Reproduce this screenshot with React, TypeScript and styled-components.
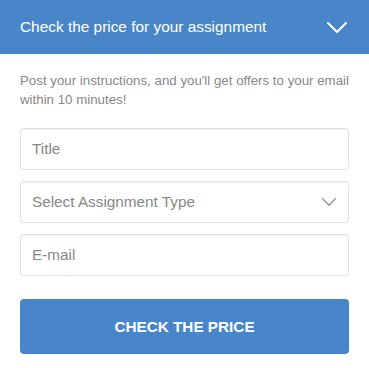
import React from "react";
import styled, { createGlobalStyle } from "styled-components";

const Global = createGlobalStyle`
  html, body { margin: 0; padding: 0; background: #fff; }
  body { font-family: "Liberation Sans", Arial, sans-serif; }
  * { box-sizing: border-box; }
`;

const Widget = styled.div`
  width: 369px;
  background: #fff;
`;

const Header = styled.div`
  height: 54px;
  background: #4986c9;
  display: flex;
  align-items: center;
  justify-content: space-between;
  padding: 0 22px 0 20px;
  color: #fff;
  font-size: 15.4px;
`;

const Body = styled.div`
  padding: 17px 20px 0 20px;
  display: flex;
  flex-direction: column;
`;

const Desc = styled.p`
  margin: 0 0 19px 0;
  color: #888;
  font-size: 13.3px;
  line-height: 19px;
`;

const Field = styled.div<{ $mb: number }>`
  height: 42px;
  border: 1px solid #dfe3e8;
  border-radius: 3px;
  box-shadow: inset 0 1px 2px rgba(0, 0, 0, 0.06);
  display: flex;
  align-items: center;
  justify-content: space-between;
  padding: 0 12px 0 11px;
  color: #888;
  font-size: 15.3px;
  margin-bottom: ${(p) => p.$mb}px;
`;

const Button = styled.button`
  height: 55px;
  border: none;
  border-radius: 4px;
  background: #4986c9;
  color: #fff;
  font-family: "Liberation Sans", Arial, sans-serif;
  font-weight: bold;
  font-size: 15.3px;
  width: 100%;
`;

const Chevron = ({ w, h, color, sw }: { w: number; h: number; color: string; sw: number }) => (
  <svg width={w} height={h} viewBox={`0 0 ${w} ${h}`} fill="none">
    <polyline
      points={`${sw / 2},${sw / 2} ${w / 2},${h - sw / 2} ${w - sw / 2},${sw / 2}`}
      stroke={color}
      strokeWidth={sw}
      strokeLinecap="round"
      strokeLinejoin="round"
    />
  </svg>
);

export default function App() {
  return (
    <Widget>
      <Global />
      <Header>
        <span>Check the price for your assignment</span>
        <Chevron w={20} h={11} color="#fff" sw={2} />
      </Header>
      <Body>
        <Desc>Post your instructions, and you'll get offers to your email within 10 minutes!</Desc>
        <Field $mb={11}>Title</Field>
        <Field $mb={11}>
          <span>Select Assignment Type</span>
          <Chevron w={14} h={8} color="#999" sw={1.5} />
        </Field>
        <Field $mb={23}>E-mail</Field>
        <Button>CHECK THE PRICE</Button>
      </Body>
    </Widget>
  );
}
